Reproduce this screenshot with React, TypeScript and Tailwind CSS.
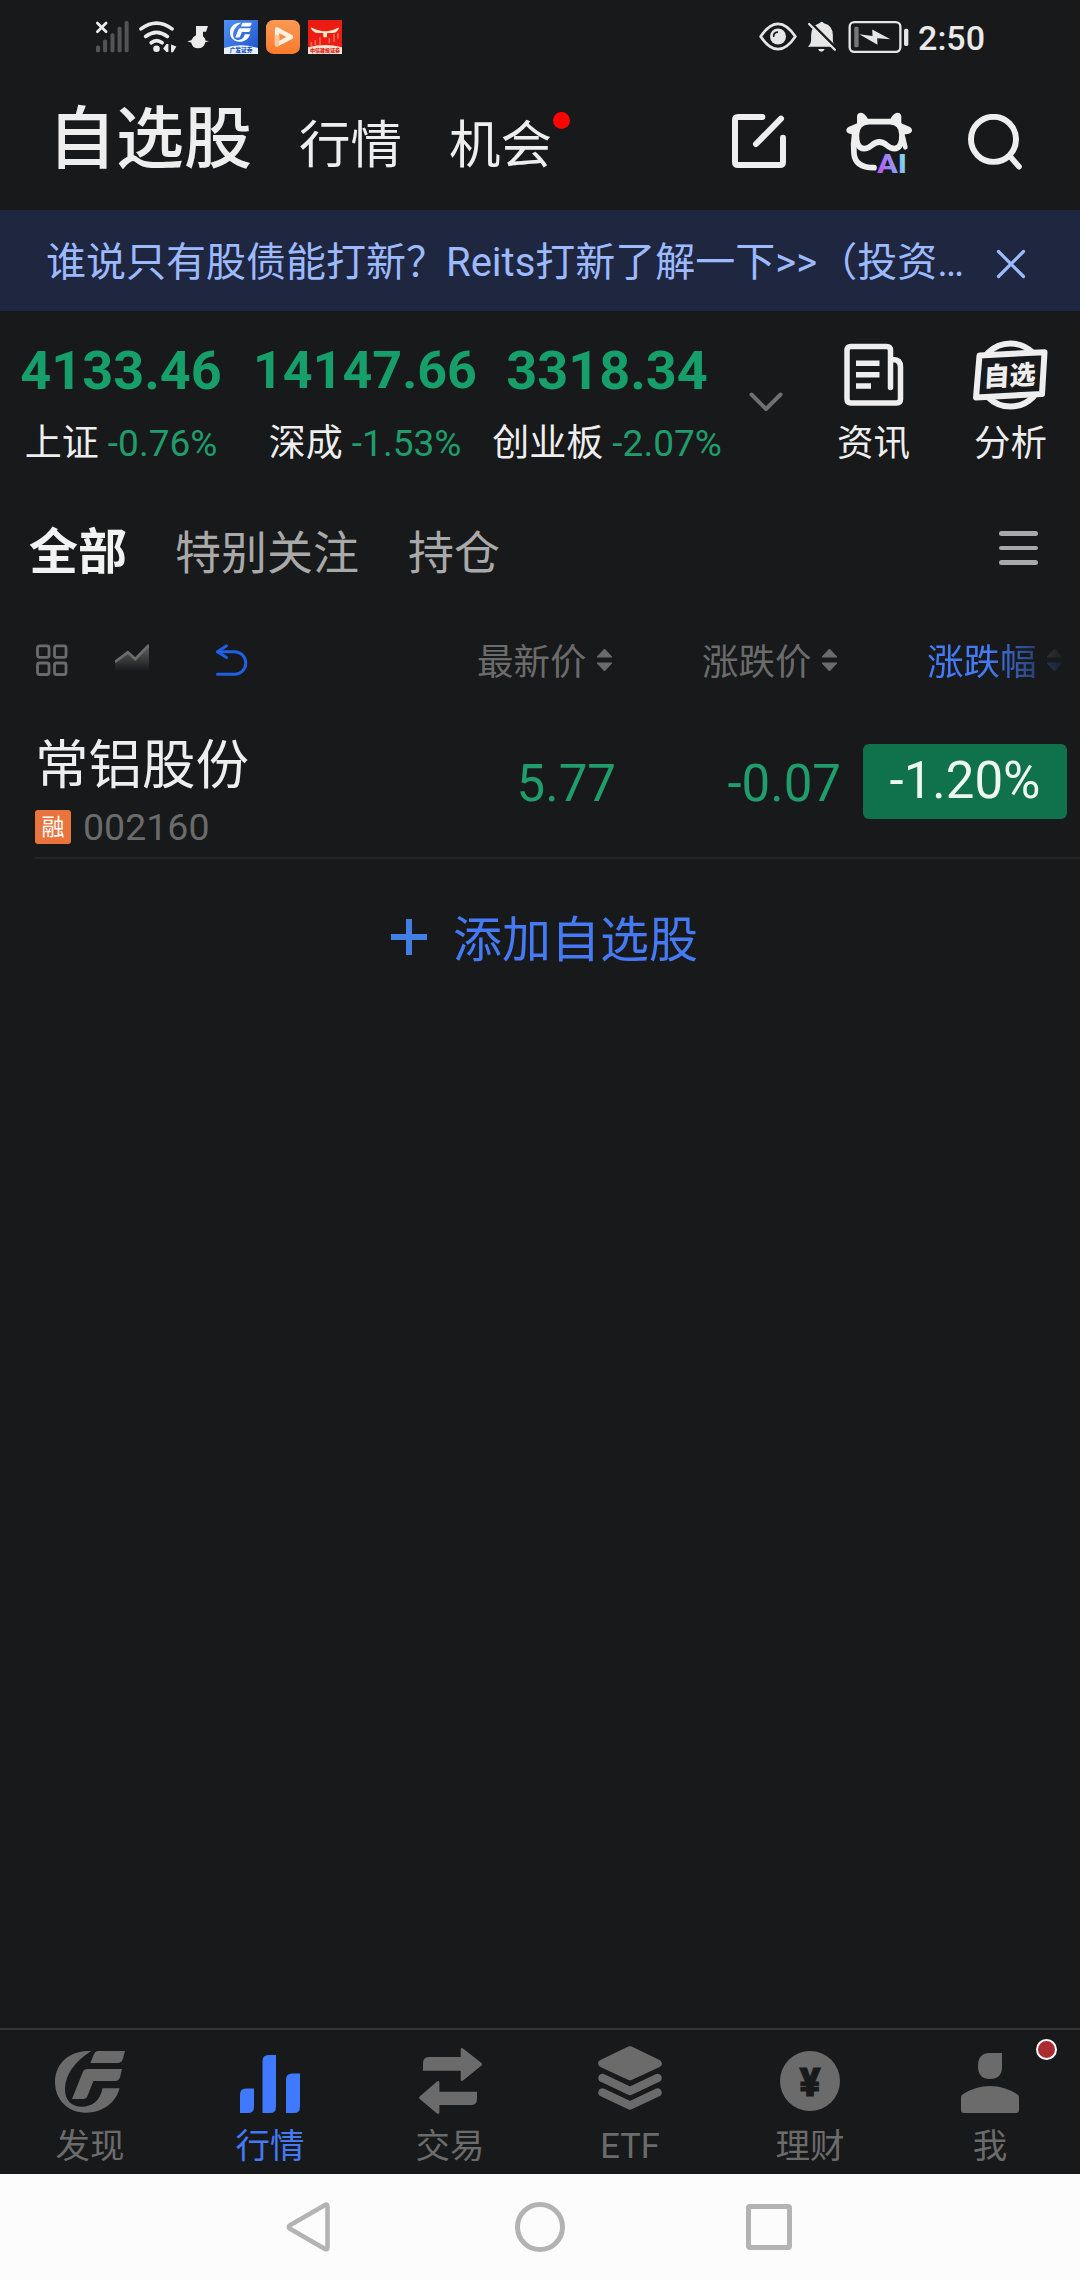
import clsx from "clsx";
import type { ReactNode } from "react";

const INDEXES = [
  { name: "上证", value: "4133.46", change: "-0.76%", width: "w-[242px]", size: "text-[54px]" },
  { name: "深成", value: "14147.66", change: "-1.53%", width: "w-[246px]", size: "text-[52px]" },
  { name: "创业板", value: "3318.34", change: "-2.07%", width: "w-[238px]", size: "text-[54px]" },
];

function StatusBar() {
  return (
    <div className="flex h-[73px] items-center justify-between pl-[95px] pr-[95px]">
      <div className="flex items-center">
        <svg viewBox="44 58 104 98" className="w-[35px] h-[33px]">
          <path d="M51 67l26 26M77 67l-26 26" stroke="#eee" strokeWidth="8" strokeLinecap="round" />
          <g fill="#535455">
            <rect x="47" y="134" width="12" height="20" rx="5" />
            <rect x="68" y="116" width="12" height="38" rx="5" />
            <rect x="90" y="97" width="12" height="57" rx="5" />
            <rect x="111" y="78" width="12" height="76" rx="5" />
            <rect x="132" y="61" width="12" height="93" rx="5" />
          </g>
        </svg>
        <svg viewBox="172 58 118 98" className="ml-2 w-[39px] h-[33px]">
          <g fill="none" stroke="#ebebeb" strokeWidth="11" strokeLinecap="round">
            <path d="M181 84Q228 49 275 84" />
            <path d="M195 107Q228 82 261 107" />
            <path d="M212 126Q228 113 245 126" />
          </g>
          <circle cx="228" cy="144" r="10" fill="#ebebeb" />
          <path d="M248 143l10-13h6v24h-6zM272 131v24h6l10-18z" fill="#ebebeb" />
        </svg>
        <svg viewBox="320 72 66 72" className="ml-2.5 w-[22px] h-6">
          <path
            d="M347 75h36l-6 17h-9v14q7 5 8 13l10 1-11 4q-4 18-22 18-17 0-20-17l-12-4 12-3q3-10 14-15z"
            fill="#ebebeb"
          />
        </svg>
        <svg viewBox="0 0 102 102" className="ml-[15px] size-[34px]">
          <defs>
            <linearGradient id="gfBg" x1="0" y1="0" x2="1" y2="1">
              <stop offset="0" stopColor="#4f93f2" />
              <stop offset="1" stopColor="#1f50cb" />
            </linearGradient>
          </defs>
          <path d="M0 0h102v102H0z" fill="url(#gfBg)" />
          <path d="M0 102V84Q51 68 102 84v18z" fill="#e8f1ff" />
          <g transform="translate(18 8) scale(.93)">
            <GfMark className="fill-white" />
          </g>
          <text x="51" y="96" textAnchor="middle" fontSize="17" fontWeight="900" fill="#2456c8">
            广发证券
          </text>
        </svg>
        <svg viewBox="0 0 102 102" className="ml-2 size-[34px]">
          <defs>
            <linearGradient id="playBg" x1="0" y1="0" x2="0" y2="1">
              <stop offset="0" stopColor="#f99a55" />
              <stop offset="1" stopColor="#fa7a2c" />
            </linearGradient>
          </defs>
          <rect width="102" height="102" rx="22" fill="url(#playBg)" />
          <path d="M33 28v45l42-22z" fill="none" stroke="#fff1e4" strokeWidth="13" strokeLinejoin="round" />
          <path d="M33 73V50" stroke="#fcc79c" strokeWidth="13" strokeLinecap="round" />
        </svg>
        <svg viewBox="0 0 102 102" className="ml-2 size-[34px]">
          <path d="M0 0h102v102H0z" fill="#ea1c14" />
          <path d="M0 102V82Q51 68 102 82v20z" fill="#fbe3cf" />
          <path d="M10 78V66M22 75V60M36 74V52M64 70V54M78 66V42M90 56V40" stroke="#f4664f" strokeWidth="5" />
          <path
            d="M8 22q20 10 37 12h12q18-2 37-12-2 9-9 13 0 4-22 4l-6 1v12H46V40l-6-1q-22 0-22-4-8-4-10-13z"
            fill="#fdeccb"
          />
          <text x="51" y="95" textAnchor="middle" fontSize="15" fontWeight="900" fill="#d8261c">
            中信建投证券
          </text>
        </svg>
      </div>

      <div className="flex items-center">
        <svg viewBox="58 62 114 92" className="w-[38px] h-[31px]">
          <path d="M63 108Q88 70 115 70T167 108Q142 146 115 146T63 108z" fill="none" stroke="#e6e6e6" strokeWidth="8" />
          <circle cx="115" cy="108" r="24" fill="#e6e6e6" />
          <path d="M102 107q0-11 11-12" fill="none" stroke="#18191a" strokeWidth="5" strokeLinecap="round" />
        </svg>
        <svg viewBox="204 60 90 94" className="ml-2.5 w-[30px] h-[31px]">
          <path
            d="M206 138q10-8 10-22v-12q0-30 25-37 7-10 14 0 27 6 27 37v12q0 14 9 22zM237 145h20q-3 8-10 8t-10-8z"
            fill="#e6e6e6"
          />
          <path d="M214 64l78 78" stroke="#18191a" strokeWidth="8" />
          <path d="M210 69l78 78" stroke="#e6e6e6" strokeWidth="7" strokeLinecap="round" />
        </svg>
        <svg viewBox="328 58 184 102" className="ml-[11px] w-[61px] h-[34px]">
          <rect x="333" y="64" width="153" height="90" rx="14" fill="none" stroke="#e6e6e6" strokeWidth="7" />
          <rect x="347" y="78" width="13" height="62" rx="4" fill="#77787a" />
          <path d="M362 101l40 5-1-20 55 30-40-3 1 19z" fill="#e6e6e6" />
          <rect x="497" y="84" width="13" height="52" rx="5" fill="#e6e6e6" />
        </svg>
        <span className="ml-[9px] pt-0.5 text-[34px] leading-none font-medium text-[#e9e9e9]">2:50</span>
      </div>
    </div>
  );
}

function Header() {
  return (
    <header className="flex h-[137px] items-start pl-[48px] pr-[58px] text-[#eee] whitespace-nowrap">
      <h1 className="mt-[27px] text-[68px] leading-[80px] font-medium">自选股</h1>
      <span className="ml-[47px] mt-[43px] text-[51.500px] leading-[60px]">行情</span>
      <span className="relative ml-[47px] mt-[43px] text-[51.500px] leading-[60px]">
        机会
        <i className="absolute -right-[18px] -top-[4px] size-[17px] rounded-full bg-[#ff0202]" />
      </span>
      <div className="ml-auto mt-[39px] flex items-start">
        <svg viewBox="96 102 162 162" className="mt-0.5 size-[54px]">
          <g fill="none" stroke="#eee" strokeWidth="18" strokeLinecap="round">
            <path d="M187 111H114Q105 111 105 120V246Q105 255 114 255H240Q249 255 249 246V173" />
            <path d="M243 116L168 192" />
          </g>
        </svg>
        <svg viewBox="438 94 201 189" className="ml-[60px] w-[67px] h-[63px] overflow-visible">
          <defs>
            <linearGradient id="aiText" x1="0" y1="0.6" x2="1" y2="0.4">
              <stop offset="0" stopColor="#c052f2" />
              <stop offset="0.6" stopColor="#8f9cf8" />
              <stop offset="1" stopColor="#7be6f4" />
            </linearGradient>
          </defs>
          <g fill="#eee">
            <path d="M471 135V106Q474 94 487 97 500 104 506 120zM604 135V106Q601 94 588 97 575 104 569 120z" />
            <path d="M475 126L447 138Q436 144 440 153 445 161 466 161zM600 126L628 138Q639 144 635 153 630 161 609 161z" />
          </g>
          <g fill="none" stroke="#eee" strokeWidth="17" strokeLinecap="round" strokeLinejoin="round">
            <path d="M506 123H570Q606 125 606 162 606 203 583 204 573 204 561 194 538 174 515 194 503 204 492 204 469 203 469 162 470 125 506 123z" />
            <path d="M464 160Q459 190 462 219 466 261 522 261" />
            <path d="M609 170L616 200" strokeWidth="14" />
          </g>
          <text x="531" y="278" fontSize="80" fontWeight="800" textLength="90" lengthAdjust="spacingAndGlyphs" fill="url(#aiText)">
            AI
          </text>
        </svg>
        <svg viewBox="804 102 163 169" className="ml-[55px] mt-0.5 w-[54px] h-[56px]">
          <g fill="none" stroke="#eee" strokeLinecap="round">
            <circle cx="881" cy="178.500" r="68" strokeWidth="18" />
            <path d="M931 230L958 261" strokeWidth="17" />
          </g>
        </svg>
      </div>
    </header>
  );
}

function Banner() {
  return (
    <div className="flex h-[101px] items-center bg-[#1e273f] pl-[46px] pr-[54px] text-[#9db9ff]">
      <p className="pt-[5px] text-[40px] leading-[60px] whitespace-nowrap">
        谁说只有股债能打新？Reits打新了解一下&gt;&gt;（投资…
      </p>
      <svg viewBox="0 0 30 30" className="ml-auto mt-1.5 size-[30px] shrink-0">
        <path d="M2.500 2.500l25 25M27.500 2.500l-25 25" stroke="currentColor" strokeWidth="3.200" strokeLinecap="round" />
      </svg>
    </div>
  );
}

function Shortcut({ label, children }: { label: string; children: ReactNode }) {
  return (
    <div className="flex w-[137px] flex-col items-center">
      <div className="flex h-[70px] items-center">{children}</div>
      <span className="mt-[10px] text-[36.500px] leading-[48px] text-[#eee]">{label}</span>
    </div>
  );
}

function IndexStrip() {
  return (
    <section className="flex h-[179px] items-start whitespace-nowrap">
      {INDEXES.map((item) => (
        <div key={item.name} className={clsx("mt-[30px] flex shrink-0 flex-col items-center", item.width)}>
          <span className={clsx("leading-[60px] font-bold text-[#169f6a]", item.size)}>{item.value}</span>
          <span className="mt-[19px] text-[37px] leading-[48px] text-[#eee]">
            {item.name} <span className="text-[#1f9d6c]">{item.change}</span>
          </span>
        </div>
      ))}
      <svg viewBox="0 0 34 20" className="ml-[23px] mt-[81px] w-[34px] h-5">
        <path d="M2.500 2.500L17 17 31.500 2.500" fill="none" stroke="#6f6f6f" strokeWidth="4" strokeLinecap="round" strokeLinejoin="round" />
      </svg>
      <div className="ml-auto mr-px mt-[29px] flex">
        <Shortcut label="资讯">
          <svg viewBox="0 0 60 64" className="w-[60px] h-16">
            <g fill="none" stroke="#eee" strokeWidth="5.500" strokeLinecap="round">
              <path d="M46.500 44.500V7.500Q46.500 3.500 42.500 3.500H7Q3 3.500 3 7.500V56Q3 60 7 60H52.500Q56.500 60 56.500 56V24Q56.500 16.500 49 16.500" />
            </g>
            <path d="M12 17.500h23.500v5.500H12zM12 29h23.500v5.500H12zM12 40.200h15v5.500H12z" fill="#eee" />
          </svg>
        </Shortcut>
        <Shortcut label="分析">
          <svg viewBox="0 0 76 70" className="w-[76px] h-[70px]">
            <circle cx="37.500" cy="35" r="31.500" fill="none" stroke="#eee" strokeWidth="6" />
            <path d="M6.500 15.400L71.500 12.200 69 54 3 57.400z" fill="#18191a" stroke="#eee" strokeWidth="6" strokeLinejoin="round" />
            <text x="12" y="45" fontSize="26" fontWeight="900" fill="#eee" transform="rotate(-3 37 35) skewX(-6) translate(2.500 0)">
              自选
            </text>
          </svg>
        </Shortcut>
      </div>
    </section>
  );
}

function GroupTabs() {
  return (
    <div className="flex h-[120px] items-center pl-[29px] pr-[42px] text-[#a9a9a9]">
      <span className="pt-[5px] text-[49px] leading-[60px] font-bold text-[#f2f2f2]">全部</span>
      <span className="ml-[48px] pt-[5px] text-[46px] leading-[60px]">特别关注</span>
      <span className="ml-[49px] pt-[5px] text-[46px] leading-[60px]">持仓</span>
      <div className="ml-auto flex flex-col gap-2.5 pb-1">
        <i className="h-[4.500px] w-[39px] rounded-full bg-[#a9a9a9]" />
        <i className="h-[4.500px] w-[39px] rounded-full bg-[#a9a9a9]" />
        <i className="h-[4.500px] w-[39px] rounded-full bg-[#a9a9a9]" />
      </div>
    </div>
  );
}

function SortArrows({ down = "#6b6b6b" }: { down?: string }) {
  return (
    <svg viewBox="0 0 17 24" className="ml-[9px] -mt-1.5 w-[17px] h-6">
      <path d="M8.500 1L16 9H1z" fill="#6b6b6b" stroke="#6b6b6b" strokeLinejoin="round" />
      <path d="M8.500 23L1 15h15z" fill={down} stroke={down} strokeLinejoin="round" />
    </svg>
  );
}

function ColumnHeader() {
  return (
    <div className="flex h-[100px] items-center pl-[36px] text-[36.500px] leading-[48px] text-[#6b6b6b] whitespace-nowrap">
      <svg viewBox="0 0 32 32" className="size-8">
        <g fill="none" stroke="#6b6b6b" strokeWidth="2.800">
          <rect x="1.500" y="1.800" width="11.500" height="11.500" rx="2" />
          <rect x="18.500" y="1.800" width="11.500" height="11.500" rx="2" />
          <rect x="1.500" y="19" width="11.500" height="11.500" rx="2" />
          <rect x="18.500" y="19" width="11.500" height="11.500" rx="2" />
        </g>
      </svg>
      <svg viewBox="0 0 34 32" className="ml-[47px] w-[34px] h-8">
        <defs>
          <linearGradient id="trend" x1="0" y1="0" x2="0" y2="1">
            <stop offset="0" stopColor="#6b6b6b" stopOpacity="0.9" />
            <stop offset="0.9" stopColor="#6b6b6b" stopOpacity="0" />
          </linearGradient>
        </defs>
        <path d="M0 18.500L12.800 8.500 20.300 15.500 34 1v29H0z" fill="url(#trend)" />
        <path d="M0 18L12.800 8.300 20.300 15 34 1" fill="none" stroke="#6b6b6b" strokeWidth="2.800" />
      </svg>
      <svg viewBox="0 0 34 32" className="ml-[66px] w-[34px] h-8">
        <g fill="none" stroke="#1f5fe6" strokeWidth="3" strokeLinecap="round" strokeLinejoin="round">
          <path d="M2.500 30.300H19.500A11.300 11.300 0 0 0 19.500 7.700H2.500" />
          <path d="M11.500 1.800L2.500 7.700 11.500 13.500" />
        </g>
      </svg>
      <div className="ml-[228px] flex w-[225px] items-center pt-1.5">
        最新价
        <SortArrows />
      </div>
      <div className="flex w-[225px] items-center pt-1.5">
        涨跌价
        <SortArrows />
      </div>
      <div className="flex items-center pt-1.5 text-[#447af5] [mask-image:linear-gradient(90deg,#000_45%,transparent_105%)]">
        涨跌幅
        <SortArrows down="#3f72e6" />
      </div>
    </div>
  );
}

function StockRow() {
  return (
    <div className="ml-[35px] flex h-[149px] border-b-2 border-[#242526] pr-[13px] whitespace-nowrap">
      <div className="flex w-[300px] flex-col pt-[26px]">
        <span className="text-[53.500px] leading-[60px] text-[#eee]">常铝股份</span>
        <div className="mt-[11px] flex items-center">
          <span className="flex h-[34px] w-[36px] items-center justify-center rounded-[3px] bg-[#e9743d] text-[23px] leading-none text-white">
            融
          </span>
          <span className="ml-[12px] text-[37.500px] leading-[40px] text-[#6b6b6b]">002160</span>
        </div>
      </div>
      <div className="flex flex-1 items-start text-[51px] leading-[60px] text-[#1f9d6c]">
        <span className="mt-[44px] ml-auto w-[225px] text-right">5.77</span>
        <span className="mt-[44px] w-[225px] text-right">-0.07</span>
        <span className="mt-[34px] ml-[22px] h-[75px] w-[204px] rounded-[6px] bg-[#10714d] pt-[7px] text-center text-[51px] text-[#eef6f1]">
          -1.20%
        </span>
      </div>
    </div>
  );
}

function AddStock() {
  return (
    <button className="flex h-[160px] w-full items-center pl-[391px] text-[#447af5]">
      <svg viewBox="0 0 36 36" className="mb-1 size-9">
        <path d="M18 0v36M0 18h36" stroke="#437fe3" strokeWidth="6" />
      </svg>
      <span className="ml-[26px] pt-1 text-[49px] leading-[60px]">添加自选股</span>
    </button>
  );
}

function GfMark({ className }: { className?: string }) {
  return (
    <g className={className}>
      <path d="M36.300 0C14-1 0 13 0 31s13 30.700 31 30.700c16 0 30-9.700 33.500-24.400H47.600C45 50 37 55.700 27 55.700 16 55.700 10 49 10 38 10 24 20 10 36.300 0z" />
      <path d="M35.300 12L39 3Q40.300 0 43.500 0H70L68 7.500Q66.800 12 62.500 12z" />
      <path d="M17 48L28 20.500Q29 18 32 18H67L65.200 25.500Q64 30 60 30H38.400L32.500 45Q31.400 48 28.500 48z" />
    </g>
  );
}

const TABS = [
  {
    label: "发现",
    icon: (
      <svg viewBox="0 0 70 62" className="-mt-0.5 w-[70px] h-[62px]">
        <GfMark className="fill-[#6b6b6b]" />
      </svg>
    ),
  },
  {
    label: "行情",
    active: true,
    icon: (
      <svg viewBox="0 0 60 58" className="mt-0.5 w-[60px] h-[58px]" fill="#3f79ff">
        <path d="M0 39.500Q0 33.500 6 33.500H14V52Q14 58 8 58H0z" />
        <path d="M22.500 6Q22.500 0 28.500 0H36V52Q36 58 30 58H22.500z" />
        <path d="M46 24.500Q46 18.500 52 18.500H60V52Q60 58 54 58H46z" />
      </svg>
    ),
  },
  {
    label: "交易",
    icon: (
      <svg viewBox="0 0 63 66" className="-mt-1 w-[63px] h-[66px]" fill="#6b6b6b">
        <path d="M4 22.700V15Q4 9 10 9H41.700V1Q42.500-.5 44 .5L62.500 15Q63.500 16.300 62.500 17.600L44 32.500Q42.500 33.500 41.700 32V22.700z" />
        <path d="M58 43.700V51Q58 57 52 57H20.400V65Q19.500 66.500 18 65.500L.7 51Q-.3 49.700.7 48.400L18 33.500Q19.500 32.500 20.400 34V43.700z" />
      </svg>
    ),
  },
  {
    label: "ETF",
    icon: (
      <svg viewBox="0 0 64 64" className="-mt-2.5 size-16" fill="none" stroke="#6b6b6b" strokeLinecap="round" strokeLinejoin="round">
        <path d="M32 4L4 17.500 32 30.500 60 17.500z" fill="#6b6b6b" strokeWidth="7.500" />
        <path d="M4.500 32L32 45 59.500 32M4.500 46.500L32 59.500 59.500 46.500" strokeWidth="8.500" />
      </svg>
    ),
  },
  {
    label: "理财",
    icon: (
      <svg viewBox="0 0 60 60" className="-mt-1 size-[60px]">
        <circle cx="30" cy="30" r="30" fill="#6b6b6b" />
        <text x="30" y="45" textAnchor="middle" fontSize="39" fontWeight="900" fill="#18191a" stroke="#18191a">
          ¥
        </text>
      </svg>
    ),
  },
  {
    label: "我",
    badge: true,
    icon: (
      <svg viewBox="0 0 58 60" className="w-[58px] h-[60px]" fill="#6b6b6b">
        <path d="M41 0V14Q41 26 29 26T17 13 29 0z" />
        <path d="M0 44Q0 42.500 1.500 41.500 14 33 29 33T56.500 41.500Q58 42.500 58 44V57Q58 60 55 60H3Q0 60 0 57z" />
      </svg>
    ),
  },
];

function TabBar() {
  return (
    <nav className="grid h-[146px] grid-cols-6 border-t-2 border-[#333536]">
      {TABS.map((tab) => (
        <div
          key={tab.label}
          className={clsx(
            "relative flex flex-col items-center pt-[18px] text-[34.500px] leading-[44px]",
            tab.active ? "text-[#447af5]" : "text-[#6b6b6b]",
          )}
        >
          <div className="flex h-[70px] items-center">{tab.icon}</div>
          <span className="mt-[6px]">{tab.label}</span>
          {tab.badge && (
            <i className="absolute left-[136px] top-[9px] size-[21px] rounded-full border-2 border-white bg-[#ab2b30]" />
          )}
        </div>
      ))}
    </nav>
  );
}

function SystemNav() {
  return (
    <div className="flex h-[106px] items-center bg-[#fcfcfc] pl-[286px]">
      <svg viewBox="0 0 44 50" className="w-11 h-[50px]">
        <path d="M39.500 2.800Q41.500 1.800 41.500 4.500V45.500Q41.500 48.200 39 47L4 26.800Q1.500 25 4 23.200z" fill="none" stroke="#b3b3b3" strokeWidth="4.500" strokeLinejoin="round" />
      </svg>
      <i className="ml-[185px] size-[50px] rounded-full border-[5px] border-[#b3b3b3]" />
      <i className="ml-[181px] h-[46px] w-[46px] rounded-[4px] border-[5px] border-[#b3b3b3]" />
    </div>
  );
}

export default function App() {
  return (
    <div className="flex h-[2280px] w-[1080px] flex-col overflow-hidden bg-[#18191a] font-[Roboto,'Noto_Sans_CJK_SC',sans-serif]">
      <StatusBar />
      <Header />
      <Banner />
      <IndexStrip />
      <GroupTabs />
      <ColumnHeader />
      <StockRow />
      <AddStock />
      <div className="flex-1" />
      <TabBar />
      <SystemNav />
    </div>
  );
}
